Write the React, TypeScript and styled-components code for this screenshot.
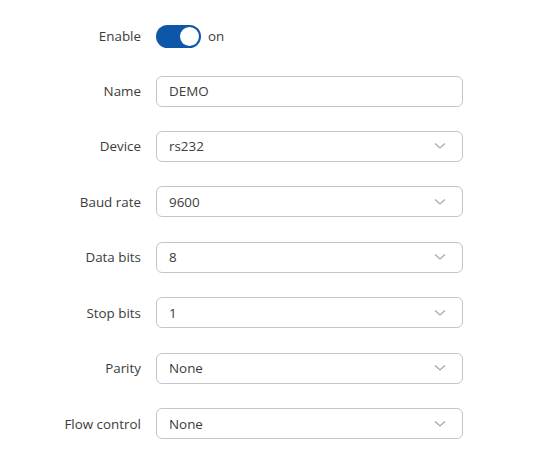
import React from "react";
import styled, { createGlobalStyle } from "styled-components";

const Global = createGlobalStyle`
  html, body { margin: 0; padding: 0; background: #fff; }
  body { font-family: "Open Sans", "Noto Sans", sans-serif; color: #404040; }
`;

const Form = styled.div`
  display: flex;
  flex-direction: column;
  padding-top: 24px;
  width: 534px;
`;

const Row = styled.div<{ $h: number; $mt?: number }>`
  display: grid;
  grid-template-columns: 141px 307px;
  column-gap: 15px;
  align-items: center;
  height: ${(p) => p.$h}px;
  margin-top: ${(p) => p.$mt ?? 0}px;
`;

const Label = styled.div`
  text-align: right;
  font-size: 13.4px;
  color: #3c3c3c;
`;

const ToggleWrap = styled.div`
  display: flex;
  align-items: center;
  gap: 7px;
  font-size: 13.4px;
  color: #3c3c3c;
`;

const Track = styled.div`
  width: 45px;
  height: 23px;
  border-radius: 12px;
  background: #0e56a8;
  display: flex;
  align-items: center;
  justify-content: flex-end;
  padding: 0 2px;
  box-sizing: border-box;
`;

const Knob = styled.div`
  width: 19px;
  height: 19px;
  border-radius: 50%;
  background: #fff;
`;

const Field = styled.div`
  box-sizing: border-box;
  height: 31px;
  border: 1px solid #c4c4cc;
  border-radius: 6px;
  display: flex;
  align-items: center;
  justify-content: space-between;
  padding: 0 16px 0 12px;
  font-size: 13.4px;
  color: #3c3c3c;
`;

const Chevron = () => (
  <svg width="12" height="8" viewBox="0 0 12 8">
    <path d="M1 1.5 L6 6 L11 1.5" fill="none" stroke="#a9a9b0" strokeWidth="1.3" />
  </svg>
);

const selects: [string, string][] = [
  ["Device", "rs232"],
  ["Baud rate", "9600"],
  ["Data bits", "8"],
  ["Stop bits", "1"],
  ["Parity", "None"],
  ["Flow control", "None"],
];

export default function App() {
  return (
    <>
      <Global />
      <Form>
        <Row $h={24}>
          <Label>Enable</Label>
          <ToggleWrap>
            <Track>
              <Knob />
            </Track>
            on
          </ToggleWrap>
        </Row>
        <Row $h={55} $mt={15.5}>
          <Label>Name</Label>
          <Field>DEMO</Field>
        </Row>
        {selects.map(([l, v]) => (
          <Row $h={55.5} key={l}>
            <Label>{l}</Label>
            <Field>
              {v}
              <Chevron />
            </Field>
          </Row>
        ))}
      </Form>
    </>
  );
}
